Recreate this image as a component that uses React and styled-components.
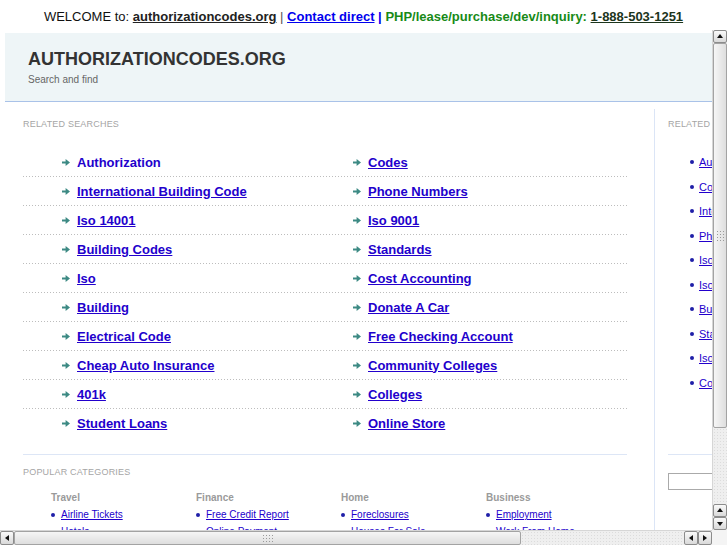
import styled, { createGlobalStyle } from "styled-components"

const GlobalStyle = createGlobalStyle`
html, body { margin:0; padding:0; background:#fff; overflow:hidden; }
body { font-family:"Liberation Sans", Arial, sans-serif; }
* { box-sizing:border-box; }
`

const TopBar = styled.div`
height:30px;
padding-top:9px;
text-align:center;
font-size:13px;
line-height:15px;
color:#111;
white-space:nowrap;`

const TopLink = styled.a`
font-weight:700;
color:${props => props.color};
text-decoration:underline;`

const TopText = styled.span`
color:${props => props.color || "#555"};
font-weight:${props => props.bold ? 700 : 400};`

const Frame = styled.div`
display:grid;
grid-template-columns:712px 15px;
grid-template-rows:500px 15px;
height:515px;`

const Viewport = styled.div`
overflow:hidden;
background:#fff;`

const Page = styled.div`
width:960px;
padding:3px 5px 0;`

const Header = styled.div`
background:#eef5f7;
border-bottom:1px solid #a9c2e8;
padding:15px 23px 15px;`

const SiteTitle = styled.h1`
margin:0;
font-size:18px;
line-height:22px;
font-weight:700;
color:#333;`

const SiteSub = styled.div`
font-size:10px;
line-height:12px;
color:#666;
margin-top:4px;`

const Body = styled.div`
display:flex;
margin-top:7px;`

const Main = styled.div`
width:650px;
border-right:1px solid #dbe5f6;
padding:10px 27px 0 18px;`

const Side = styled.div`
flex:1;
padding:10px 0 0 13px;`

const Label = styled.div`
font-size:9px;
line-height:11px;
letter-spacing:0.2px;
color:#a5a5a5;
text-transform:uppercase;
margin-top:${props => props.top || 0}px;`

const SearchList = styled.div`
margin-top:18px;`

const SearchRow = styled.div`
display:grid;
grid-template-columns:291px 1fr;
padding-left:39px;
height:29px;
align-items:center;
background-image:linear-gradient(to right, #bdbdbd 1px, transparent 1px);
background-size:3px 1px;
background-repeat:repeat-x;
background-position:left bottom;
&:last-child{background:none;}`

const SearchItem = styled.div`
display:flex;
align-items:center;
gap:7px;`

const SearchLink = styled.a`
font-size:13px;
font-weight:700;
line-height:16px;
color:#2200cc;
text-decoration:${props => props.plain ? "none" : "underline"};`

const Divider = styled.div`
border-top:1px solid #dde6f6;
margin-top:${props => props.top}px;`

const Categories = styled.div`
display:grid;
grid-template-columns:repeat(4, 145px);
padding-left:28px;
margin-top:14px;`

const CatTitle = styled.div`
font-size:10px;
font-weight:700;
line-height:12px;
color:#9a9a9a;
margin-bottom:2px;`

const CatItem = styled.div`
display:flex;
align-items:center;
gap:6px;
height:17px;`

const Dot = styled.span`
width:4px;
height:4px;
border-radius:50%;
background:#1f1fa8;
flex:none;`

const SmallLink = styled.a`
font-size:${props => props.size || 10}px;
color:#2200cc;
text-decoration:underline;
white-space:nowrap;`

const SideList = styled.div`
margin-top:20px;`

const SideItem = styled.div`
display:flex;
align-items:center;
gap:5px;
height:24.5px;
padding-left:22px;`

const SideInput = styled.input`
display:block;
margin-top:18px;
width:160px;
height:17px;
border:1px solid #aaa;
background:#fff;`

const VBar = styled.div`
display:flex;
flex-direction:column;
background:#ececec;
border-left:1px solid #d6d6d6;`

const HBar = styled.div`
display:flex;
background:#ececec;
border-top:1px solid #d6d6d6;`

const Corner = styled.div`
background:#f4f4f4;`

const SBtn = styled.div`
flex:none;
width:${props => props.horizontal ? "14px" : "100%"};
height:${props => props.horizontal ? "100%" : "13px"};
border:1px solid #8c8c8c;
border-radius:2px;
background:linear-gradient(#fafafa, #d9d9d9);
display:flex;
align-items:center;
justify-content:center;`

const Tri = styled.span`
width:0;
height:0;
border:3.5px solid transparent;
${props => props.dir === "up" && "border-bottom:4px solid #111; border-top:none; margin-top:-1px;"}
${props => props.dir === "down" && "border-top:4px solid #111; border-bottom:none;"}
${props => props.dir === "left" && "border-right:4px solid #111; border-left:none;"}
${props => props.dir === "right" && "border-left:4px solid #111; border-right:none;"}`

const Thumb = styled.div`
flex:none;
width:${props => props.horizontal ? "507px" : "100%"};
height:${props => props.horizontal ? "100%" : "385px"};
border:1px solid #a3a3a3;
border-radius:2px;
background:${props => props.horizontal ? "linear-gradient(#f6f6f6, #dedede)" : "linear-gradient(90deg, #f6f6f6, #dedede)"};
display:flex;
align-items:center;
justify-content:center;`

const Grip = styled.span`
width:${props => props.horizontal ? "12px" : "8px"};
height:${props => props.horizontal ? "8px" : "12px"};
background-image:radial-gradient(circle, #9a9a9a 0.7px, transparent 0.9px);
background-size:3px 3px;`

const Track = styled.div`
flex:1;
background-color:#efefef;
background-image:radial-gradient(circle, #dcdcdc 0.5px, transparent 0.7px);
background-size:3px 3px;`

const Arrow = () => (
  <svg width="8" height="7" viewBox="0 0 8 7">
    <path d="M0 2.6h3.6V0L8 3.5 3.6 7V4.4H0z" fill="#3d8a84" />
  </svg>
)

const rows = [
  ["Authorization", "Codes"],
  ["International Building Code", "Phone Numbers"],
  ["Iso 14001", "Iso 9001"],
  ["Building Codes", "Standards"],
  ["Iso", "Cost Accounting"],
  ["Building", "Donate A Car"],
  ["Electrical Code", "Free Checking Account"],
  ["Cheap Auto Insurance", "Community Colleges"],
  ["401k", "Colleges"],
  ["Student Loans", "Online Store"],
]

const sideLinks = ["Authorization", "Codes", "International Building Code", "Phone Numbers", "Iso 14001", "Iso 9001", "Building Codes", "Standards", "Iso", "Cost Accounting"]

const categories = [
  { title: "Travel", links: ["Airline Tickets", "Hotels"] },
  { title: "Finance", links: ["Free Credit Report", "Online Payment"] },
  { title: "Home", links: ["Foreclosures", "Houses For Sale"] },
  { title: "Business", links: ["Employment", "Work From Home"] },
]

const App = () => {
  return (
    <>
      <GlobalStyle />
      <TopBar>
        <TopText color="#111">WELCOME to: </TopText>
        <TopLink color="#222">authorizationcodes.org</TopLink>
        <TopText> | </TopText>
        <TopLink color="#0000ee">Contact direct</TopLink>
        <TopText color="#0000ee" bold> | </TopText>
        <TopText color="#178a17" bold>PHP/lease/purchase/dev/inquiry: </TopText>
        <TopLink color="#1c351c">1-888-503-1251</TopLink>
      </TopBar>

      <Frame>
        <Viewport>
          <Page>
            <Header>
              <SiteTitle>AUTHORIZATIONCODES.ORG</SiteTitle>
              <SiteSub>Search and find</SiteSub>
            </Header>

            <Body>
              <Main>
                <Label>Related Searches</Label>
                <SearchList>
                  {rows.map((r, i) => (
                    <SearchRow key={i}>
                      {r.map((t, j) => (
                        <SearchItem key={j}>
                          <Arrow />
                          <SearchLink plain={i === 0 && j === 0}>{t}</SearchLink>
                        </SearchItem>
                      ))}
                    </SearchRow>
                  ))}
                </SearchList>

                <Divider top={16} />
                <Label top={12}>Popular Categories</Label>
                <Categories>
                  {categories.map(c => (
                    <div key={c.title}>
                      <CatTitle>{c.title}</CatTitle>
                      {c.links.map(l => (
                        <CatItem key={l}>
                          <Dot />
                          <SmallLink>{l}</SmallLink>
                        </CatItem>
                      ))}
                    </div>
                  ))}
                </Categories>
              </Main>

              <Side>
                <Label>Related Searches</Label>
                <SideList>
                  {sideLinks.map(l => (
                    <SideItem key={l}>
                      <Dot />
                      <SmallLink size={11}>{l}</SmallLink>
                    </SideItem>
                  ))}
                </SideList>
                <Divider top={59} />
                <SideInput />
              </Side>
            </Body>
          </Page>
        </Viewport>

        <VBar>
          <SBtn><Tri dir="up" /></SBtn>
          <Thumb><Grip /></Thumb>
          <Track />
          <SBtn><Tri dir="up" /></SBtn>
          <SBtn><Tri dir="down" /></SBtn>
        </VBar>

        <HBar>
          <SBtn horizontal><Tri dir="left" /></SBtn>
          <Thumb horizontal><Grip horizontal /></Thumb>
          <Track />
          <SBtn horizontal><Tri dir="left" /></SBtn>
          <SBtn horizontal><Tri dir="right" /></SBtn>
        </HBar>

        <Corner />
      </Frame>
    </>
  )
}

export default App
